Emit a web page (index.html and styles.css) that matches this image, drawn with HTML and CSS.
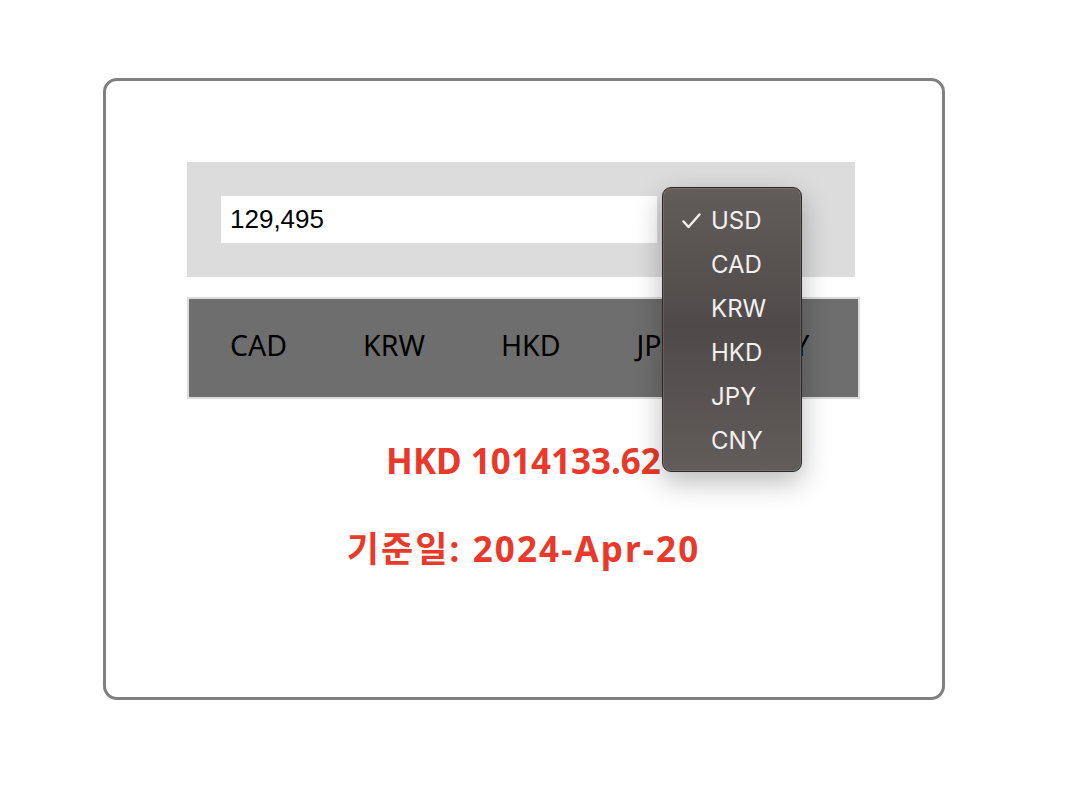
FILE: index.html
```html
<!DOCTYPE html>
<html lang="ko">
<head>
  <meta charset="utf-8">
  <meta name="viewport" content="width=device-width,initial-scale=1.0">
  <title>환율 계산기</title>
  <link rel="stylesheet" href="styles.css">
</head>
<body>
  <div class="card">
    <!-- Amount + base currency -->
    <div class="input-box">
      <input class="amount" type="text" value="129,495">
      <div class="select-slot"></div>
    </div>

    <!-- Target currencies -->
    <ul class="tabs">
      <li class="tab">CAD</li>
      <li class="tab">KRW</li>
      <li class="tab">HKD</li>
      <li class="tab">JPY</li>
      <li class="tab">CNY</li>
    </ul>

    <div class="result">
      <div class="result-line">HKD 1014133.62</div>
      <div class="result-line date">기준일: 2024-Apr-20</div>
    </div>

    <!-- Open select popup -->
    <div class="popup">
      <div class="popup-item selected">
        <svg class="check" width="19" height="16" viewBox="0 0 19 16">
          <polyline points="1.5,8.5 6.5,14 17.5,1.5" fill="none" stroke="#f2f0ef" stroke-width="2.4" stroke-linecap="round" stroke-linejoin="round"/>
        </svg>
        USD
      </div>
      <div class="popup-item">CAD</div>
      <div class="popup-item">KRW</div>
      <div class="popup-item">HKD</div>
      <div class="popup-item">JPY</div>
      <div class="popup-item">CNY</div>
    </div>
  </div>
</body>
</html>
```

FILE: styles.css
```css
html, body {
  margin: 0;
  padding: 0;
}

body {
  font-family: 'Noto Sans', 'Noto Sans CJK KR', sans-serif;
  background: #fff;
}

.card {
  position: relative;
  box-sizing: border-box;
  width: 842px;
  height: 622px;
  margin: 78px 0 0 103px;
  padding: 81px 0 0 81px;
  border: 3px solid #808080;
  border-radius: 14px;
}

/* Input area */
.input-box {
  display: flex;
  width: 668px;
  box-sizing: border-box;
  padding: 34px;
  background: #dcdcdc;
}

.amount {
  width: 436px;
  height: 47px;
  box-sizing: border-box;
  padding: 0 9px;
  border: none;
  outline: none;
  background: #fff;
  font-family: 'Liberation Sans', Arial, sans-serif;
  font-size: 26px;
  color: #000;
}

.select-slot {
  flex: 1;
}

/* Currency tabs */
.tabs {
  display: flex;
  align-items: center;
  gap: 76px;
  width: 673px;
  height: 102px;
  box-sizing: border-box;
  margin: 20px 0 0;
  padding: 0 0 7px 41px;
  list-style: none;
  border: 2px solid #dcdcdc;
  background: #6e6e6e;
}

.tab {
  font-size: 28.5px;
  color: #000;
}

/* Result text */
.result {
  width: 673px;
  margin-top: 38px;
  text-align: center;
}

.result-line {
  line-height: 48px;
  font-size: 35px;
  font-weight: 700;
  color: #e8392b;
}

.result-line + .result-line {
  margin-top: 40px;
}

.date {
  letter-spacing: 2.1px;
}

/* Native select popup look */
.popup {
  position: absolute;
  left: 556px;
  top: 106px;
  width: 140px;
  box-sizing: border-box;
  padding: 11px 0 8px;
  border: 1px solid #2b2827;
  border-radius: 9px;
  background: linear-gradient(#625c5a, #4f4a49 50%, #625d5b);
  box-shadow: inset 0 0 0 1px rgba(255, 255, 255, 0.12), 0 10px 28px rgba(0, 0, 0, 0.28);
}

.popup-item {
  position: relative;
  height: 44px;
  line-height: 44px;
  padding-left: 48px;
  font-family: Inter, 'Noto Sans', sans-serif;
  font-size: 24px;
  color: #f2f0ef;
}

.check {
  position: absolute;
  left: 19px;
  top: 14px;
}
```
